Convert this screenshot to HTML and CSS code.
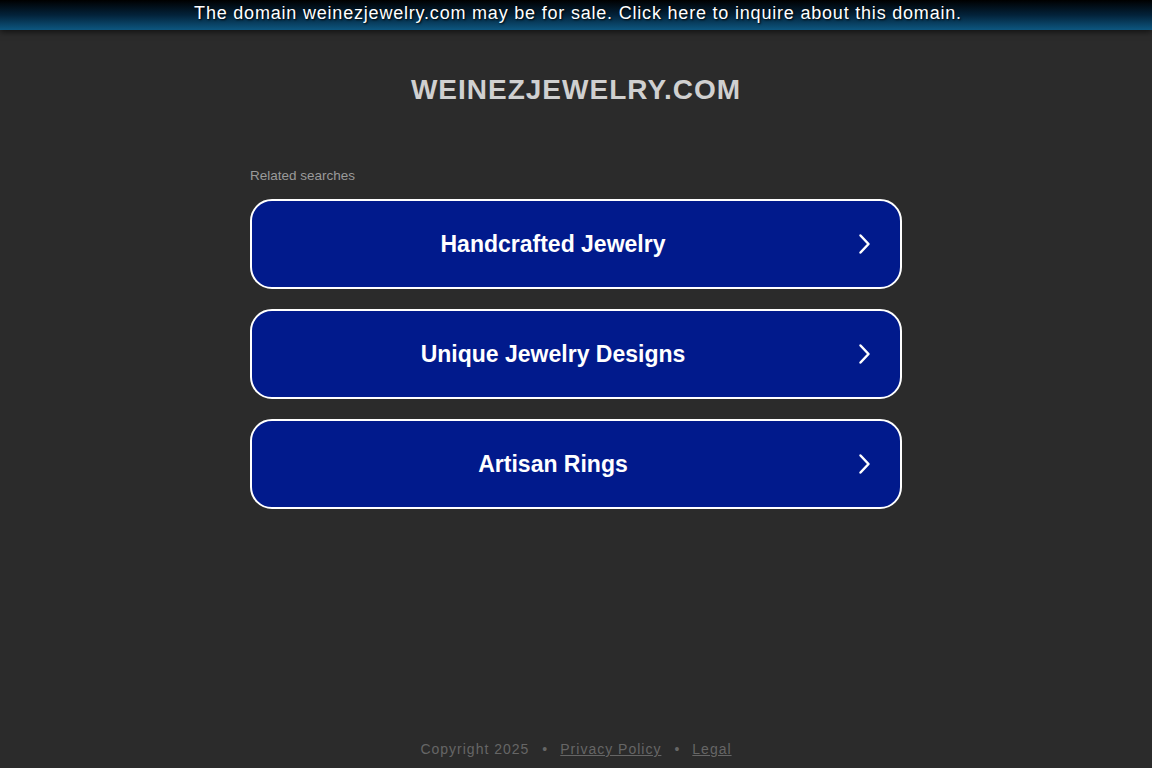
FILE: index.html
```html
<!DOCTYPE html>
<html lang="en">
<head>
<meta charset="utf-8">
<title>weinezjewelry.com</title>
<link rel="stylesheet" href="styles.css">
</head>
<body>
<div class="topbar"><a href="#">The domain weinezjewelry.com may be for sale. Click here to inquire about this domain.</a></div>
<main class="main">
  <h1 class="domain">WEINEZJEWELRY.COM</h1>
  <section class="related">
    <p class="related-title">Related searches</p>
    <a class="search" href="#"><span class="label">Handcrafted Jewelry</span><svg class="arrow" viewBox="0 0 24 24" width="24" height="24"><path d="M8.5 3.5 L16.5 12 L8.5 20.5" fill="none" stroke="#fff" stroke-width="2.5" stroke-linecap="round" stroke-linejoin="round"/></svg></a>
    <a class="search" href="#"><span class="label">Unique Jewelry Designs</span><svg class="arrow" viewBox="0 0 24 24" width="24" height="24"><path d="M8.5 3.5 L16.5 12 L8.5 20.5" fill="none" stroke="#fff" stroke-width="2.5" stroke-linecap="round" stroke-linejoin="round"/></svg></a>
    <a class="search" href="#"><span class="label">Artisan Rings</span><svg class="arrow" viewBox="0 0 24 24" width="24" height="24"><path d="M8.5 3.5 L16.5 12 L8.5 20.5" fill="none" stroke="#fff" stroke-width="2.5" stroke-linecap="round" stroke-linejoin="round"/></svg></a>
  </section>
</main>
<footer class="footer">
  <span>Copyright 2025</span><span class="dot">•</span><a href="#">Privacy Policy</a><span class="dot">•</span><a href="#">Legal</a>
</footer>
</body>
</html>
```
FILE: styles.css
```css
html, body {
  margin: 0;
  padding: 0;
  height: 100%;
}
body {
  background: #2b2b2b;
  font-family: "Liberation Sans", Arial, sans-serif;
  display: flex;
  flex-direction: column;
  min-height: 768px;
}
.topbar {
  height: 30px;
  background: linear-gradient(to bottom, #000 0%, #03223a 50%, #0d5780 100%);
  box-shadow: 0 2px 6px rgba(0,0,0,0.6);
  text-align: center;
  line-height: 27px;
}
.topbar a {
  color: #fff;
  text-decoration: none;
  font-size: 18px;
  letter-spacing: 0.8px;
  text-shadow: 1px 1px 2px #000;
  padding-left: 4px;
}
.main {
  flex: 1;
  display: flex;
  flex-direction: column;
  align-items: center;
}
.domain {
  margin: 43px 0 0;
  font-size: 28px;
  font-weight: bold;
  color: #d0d0d0;
  letter-spacing: 1px;
  line-height: 34px;
}
.related {
  width: 652px;
  margin-top: 60px;
  display: flex;
  flex-direction: column;
  gap: 20px;
}
.related-title {
  margin: 0 0 -5px;
  font-size: 13.5px;
  color: #9a9a9a;
  line-height: 17px;
}
.search {
  box-sizing: border-box;
  height: 90px;
  border: 2px solid #fff;
  border-radius: 22px;
  background: #011a8c;
  display: flex;
  align-items: center;
  justify-content: center;
  position: relative;
  text-decoration: none;
  padding-right: 46px;
}
.label {
  color: #fff;
  font-size: 23px;
  font-weight: bold;
}
.arrow {
  position: absolute;
  right: 24px;
  top: 31px;
}
.footer {
  height: 27px;
  display: flex;
  justify-content: center;
  align-items: flex-start;
  font-size: 14px;
  color: #666;
  letter-spacing: 1px;
  line-height: 16px;
  padding-top: 1px;
}
.footer a {
  color: #666;
  text-decoration: underline;
}
.dot {
  margin: 0 12px 0 13px;
}
```
